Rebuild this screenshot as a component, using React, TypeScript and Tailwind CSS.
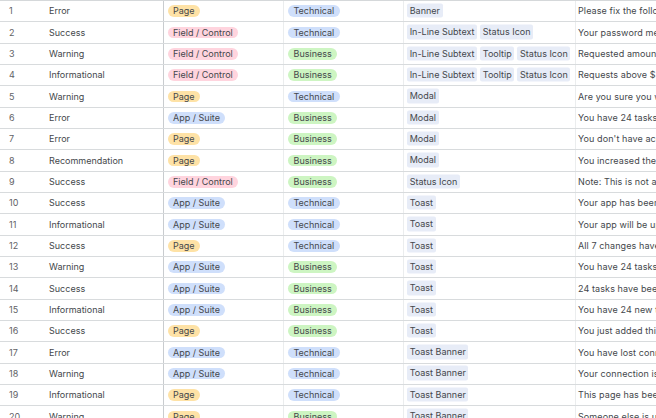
const rows: [string, string, string, string, string[], string][] = [
  ["1", "Error", "Page", "Technical", ["Banner"], "Please fix the following errors"],
  ["2", "Success", "Field / Control", "Technical", ["In-Line Subtext", "Status Icon"], "Your password meets all"],
  ["3", "Warning", "Field / Control", "Business", ["In-Line Subtext", "Tooltip", "Status Icon"], "Requested amount exceeds"],
  ["4", "Informational", "Field / Control", "Business", ["In-Line Subtext", "Tooltip", "Status Icon"], "Requests above $500 need"],
  ["5", "Warning", "Page", "Technical", ["Modal"], "Are you sure you want to"],
  ["6", "Error", "App / Suite", "Business", ["Modal"], "You have 24 tasks"],
  ["7", "Error", "Page", "Business", ["Modal"], "You don't have access"],
  ["8", "Recommendation", "Page", "Business", ["Modal"], "You increased the"],
  ["9", "Success", "Field / Control", "Business", ["Status Icon"], "Note: This is not a"],
  ["10", "Success", "App / Suite", "Technical", ["Toast"], "Your app has been"],
  ["11", "Informational", "App / Suite", "Technical", ["Toast"], "Your app will be up"],
  ["12", "Success", "Page", "Technical", ["Toast"], "All 7 changes have"],
  ["13", "Warning", "App / Suite", "Business", ["Toast"], "You have 24 tasks"],
  ["14", "Success", "App / Suite", "Business", ["Toast"], "24 tasks have been"],
  ["15", "Informational", "App / Suite", "Business", ["Toast"], "You have 24 new tasks"],
  ["16", "Success", "Page", "Business", ["Toast"], "You just added this"],
  ["17", "Error", "App / Suite", "Technical", ["Toast Banner"], "You have lost connection"],
  ["18", "Warning", "App / Suite", "Technical", ["Toast Banner"], "Your connection is"],
  ["19", "Informational", "Page", "Technical", ["Toast Banner"], "This page has been"],
  ["20", "Warning", "Page", "Business", ["Toast Banner"], "Someone else is using"],
];

function Scope({ v }: { v: string }) {
  const c = v === "Page" ? "bg-[#fee2a6]" : v === "Field / Control" ? "bg-[#ffd4de]" : "bg-[#cfdffb]";
  return <span className={`${c} rounded-full px-[5px] h-[11.5px] leading-[11.5px] whitespace-nowrap`}>{v}</span>;
}

function Kind({ v }: { v: string }) {
  const c = v === "Business" ? "bg-[#cdf5c2]" : "bg-[#cfdffb]";
  return <span className={`${c} rounded-full px-[5.5px] h-[11.5px] leading-[11.5px] whitespace-nowrap`}>{v}</span>;
}

export default function App() {
  return (
    <div className="w-[656px] h-[418px] overflow-hidden bg-white text-[#44474b] text-[9px] font-['Inter','Liberation_Sans',sans-serif]">
      <div className="border-t border-[#d5d8da] h-[1px]" />
      {rows.map((r) => (
        <div key={r[0]} className="flex h-[21.33px] border-b border-[#d8dbdd] box-border overflow-hidden">
          <div className="w-[49px] shrink-0 pl-[9px] flex items-center text-[#5f6266]">{r[0]}</div>
          <div className="w-[114px] shrink-0 flex items-center">{r[1]}</div>
          <div className="w-[120px] shrink-0 flex items-center pl-[4px] border-l border-[#c9cccf]"><Scope v={r[2]} /></div>
          <div className="w-[120px] shrink-0 flex items-center pl-[4px] border-l border-[#ebedee]"><Kind v={r[3]} /></div>
          <div className="w-[172px] shrink-0 flex items-center gap-[3px] pl-[3px] border-l border-[#ebedee]">
            {r[4].map((t) => (
              <span key={t} className="bg-[#e7ecf7] rounded-[2px] px-[2.7px] h-[14.5px] leading-[14.5px] whitespace-nowrap -translate-y-[0.5px]">{t}</span>
            ))}
          </div>
          <div className="flex-1 min-w-0 flex items-center pl-[2px] border-l border-[#ebedee] whitespace-nowrap overflow-hidden tracking-[0.1px]">{r[5]}</div>
        </div>
      ))}
    </div>
  );
}
